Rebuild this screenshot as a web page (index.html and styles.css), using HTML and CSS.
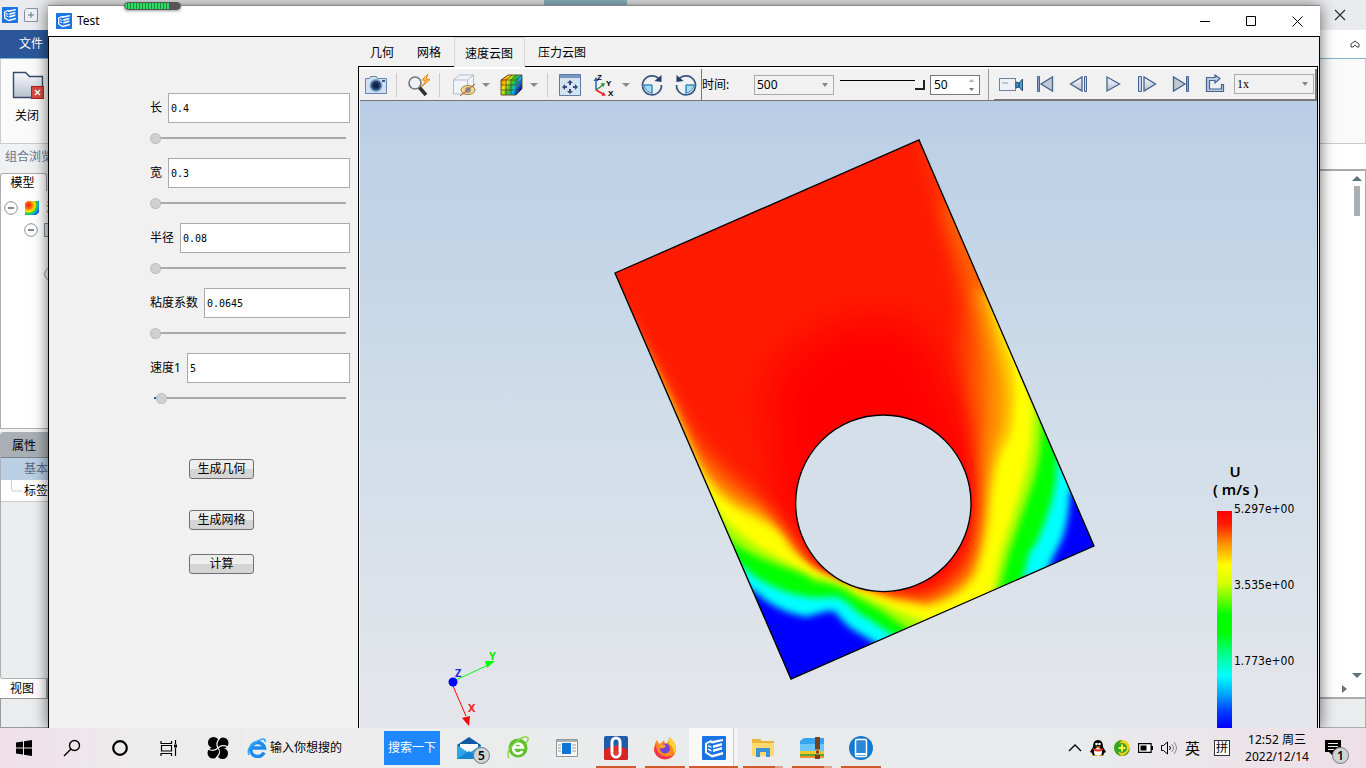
FILE: index.html
```html
<!DOCTYPE html>
<html lang="zh-CN">
<head>
<meta charset="utf-8">
<title>Test</title>
<link rel="stylesheet" href="styles.css">
</head>
<body>
<svg class="defs" aria-hidden="true">
  <defs>
    <symbol id="logo" viewBox="0 0 24 24"><rect width="24" height="24" rx="1" fill="#1b73e8"/><path d="M3 7l6-3 1 1 11-2v2L10 7.500 8 6.500 5 8v8l5 3 11-3v2.500L10 21.500 3 17z" fill="#fff"/><path d="M11 9.500L20 7v2.500l-9 2.500zM11 13.500L20 11v2.500L11 16zM6 9l3.500 1.500v1.500L6 10.500zM6 12.500L9.500 14v1.500L6 14z" fill="#fff"/></symbol>
    <symbol id="minus" viewBox="0 0 14 14"><circle cx="7" cy="7" r="6.3" fill="#fff" stroke="#8a9097"/><path d="M4 7h6" stroke="#555" stroke-width="1.4"/></symbol>
    <linearGradient id="steel" x2="0" y2="1"><stop stop-color="#f8faff"/><stop offset="1" stop-color="#b8c0cd"/></linearGradient>
    <linearGradient id="rainbow" x2="1" y2=".5"><stop stop-color="#ff3a00"/><stop offset=".35" stop-color="#ffe000"/><stop offset=".6" stop-color="#28c828"/><stop offset=".8" stop-color="#00b8ff"/><stop offset="1" stop-color="#0018c8"/></linearGradient>
    <radialGradient id="heat" cx=".25" cy=".3" r=".9"><stop stop-color="#f21800"/><stop offset=".3" stop-color="#ff7a00"/><stop offset=".5" stop-color="#ffe800"/><stop offset=".65" stop-color="#3cd23c"/><stop offset=".8" stop-color="#00a8f0"/><stop offset="1" stop-color="#0018c8"/></radialGradient>
  </defs>
</svg>

<main class="desktop">
  <section class="host">
    <header class="host-title">
      <svg width="16" height="16"><use href="#logo"/></svg>
      <svg width="14" height="14" viewBox="0 0 14 14"><path d="M.5 13.500V2.500l2-2h11v13z" fill="#edf0f4" stroke="#8793a3"/><path d="M7 4v6M4 7h6" stroke="#66758a"/></svg>
      <button class="plain push" aria-label="关闭主窗口"><svg width="12" height="12" viewBox="0 0 12 12"><path d="M1 1l10 10M11 1L1 11" stroke="#333" stroke-width="1.300"/></svg></button>
    </header>
    <div class="host-tabs">
      <button class="file-tab">文件</button>
      <svg class="push" width="10" height="8" viewBox="0 0 10 8"><path d="M1 4l4-3 4 3v3H7L5 5 3 7H1z" fill="none" stroke="#444"/></svg>
    </div>
    <div class="ribbon">
      <button class="ribbon-btn">
        <svg width="34" height="32" viewBox="0 0 34 32"><path d="M3.500 27.500v-25h12l4 4h13v21z" fill="url(#steel)" stroke="#34496b" stroke-width="1.400"/><rect x="21.500" y="16.500" width="12" height="12" fill="#d34a43" stroke="#a8241f"/><path d="M25 20l5 5M30 20l-5 5" stroke="#fff" stroke-width="1.500"/></svg>
        <span>关闭</span>
      </button>
    </div>
    <div class="host-body">
      <aside class="dock">
        <div class="dock-title">组合浏览器</div>
        <div class="dock-tabs"><button class="dock-tab">模型</button></div>
        <div class="tree">
          <div class="tree-row"><svg width="14" height="14"><use href="#minus"/></svg><svg width="16" height="16" viewBox="0 0 16 16"><path d="M1 3l3-2h11v11l-3 3H1z" fill="url(#heat)"/></svg><span class="warm">流体</span></div>
          <div class="tree-row level2"><svg width="14" height="14"><use href="#minus"/></svg><svg width="14" height="14" viewBox="0 0 14 14"><path d="M.5.5h13v13H.5zM4 4h8" fill="#dfe3e8" stroke="#7d8794"/></svg></div>
          <div class="tree-row level3"><svg width="14" height="14"><use href="#minus"/></svg></div>
        </div>
        <div class="props">
          <div class="props-title">属性</div>
          <div class="props-group">基本</div>
          <div class="props-row"><svg width="11" height="22" viewBox="0 0 11 22"><path d="M.5 0v9q0 2 2 2H11" fill="none" stroke="#ccc"/></svg><span>标签</span></div>
        </div>
        <div class="view-tabs"><button class="dock-tab">视图</button></div>
        <div class="dock-foot"></div>
      </aside>
      <div class="host-view">
        <div class="scroll-area">
          <svg width="10" height="5" viewBox="0 0 10 5"><path d="M5 0l5 5H0z" fill="#5f747c"/></svg>
          <span class="scroll-thumb"></span>
          <svg class="scroll-down" width="10" height="5" viewBox="0 0 10 5"><path d="M0 0h10L5 5z" fill="#5f747c"/></svg>
          <svg class="scroll-right" width="5" height="8" viewBox="0 0 5 8"><path d="M0 0l5 4-5 4z" fill="#5f747c"/></svg>
        </div>
        <div class="host-foot"></div>
      </div>
    </div>
  </section>

  <span class="top-chip"></span>

  <section class="window">
    <header class="title-bar">
      <svg width="16" height="16"><use href="#logo"/></svg>
      <span>Test</span>
      <button class="plain push" aria-label="最小化"><svg width="10" height="10" viewBox="0 0 10 10"><path d="M0 5.500h10" stroke="#000"/></svg></button>
      <button class="plain" aria-label="最大化"><svg width="10" height="10" viewBox="0 0 10 10"><path d="M.5.5h9v9h-9z" fill="none" stroke="#000"/></svg></button>
      <button class="plain" aria-label="关闭"><svg width="11" height="11" viewBox="0 0 11 11"><path d="M.5.5l10 10M10.500.5l-10 10" stroke="#000"/></svg></button>
    </header>
    <div class="client">
      <form class="params">
        <div class="field"><label for="len">长</label><input id="len" type="text" value="0.4"></div>
        <input class="slide" type="range" aria-label="长" value="0">
        <div class="field"><label for="wid">宽</label><input id="wid" type="text" value="0.3"></div>
        <input class="slide" type="range" aria-label="宽" value="0">
        <div class="field"><label for="rad">半径</label><input id="rad" type="text" value="0.08"></div>
        <input class="slide" type="range" aria-label="半径" value="0">
        <div class="field"><label for="vis">粘度系数</label><input id="vis" type="text" value="0.0645"></div>
        <input class="slide" type="range" aria-label="粘度系数" value="0">
        <div class="field"><label for="vel">速度1</label><input id="vel" type="text" value="5"></div>
        <input class="slide started" type="range" aria-label="速度1" value="3">
        <div class="actions">
          <button type="button">生成几何</button>
          <button type="button">生成网格</button>
          <button type="button">计算</button>
        </div>
      </form>

      <div class="result">
        <nav class="tabs">
          <button>几何</button><button>网格</button><button class="active">速度云图</button><button>压力云图</button>
        </nav>
        <div class="frame">
          <div class="toolbar">
            <div class="tools">
              <button class="tool" aria-label="截图"><svg width="24" height="24" viewBox="0 0 24 24"><path d="M1.500 5.500h4l1-2h6l1 2h9v15h-21z" fill="#cfe0f2" stroke="#6484a8"/><circle cx="12" cy="12.500" r="6.500" fill="#7ea0c6"/><circle cx="12" cy="12.500" r="5" fill="#28487a"/><circle cx="12" cy="12.500" r="3" fill="#10244a"/><path d="M18 8h3" stroke="#34588a" stroke-width="2"/></svg></button>
              <i class="sep"></i>
              <button class="tool" aria-label="缩放"><svg width="24" height="24" viewBox="0 0 24 24"><path d="M12 14l7 8" stroke="#333" stroke-width="3.500"/><circle cx="8" cy="10" r="6" fill="#edf2f8" stroke="#777" stroke-width="1.600"/><path d="M21 1l-6 6 4 .5-4 6 8-7-4-.5z" fill="#ffc94a" stroke="#e8861b"/></svg></button>
              <i class="sep"></i>
              <button class="tool cube" aria-label="显示"><svg width="24" height="24" viewBox="0 0 24 24"><path d="M1.500 7l6-5h14v13l-5 6h-15z" fill="#f1f4f8" stroke="#b4bbc5"/><path d="M1.500 7h14v14M15.500 7l6-5" fill="none" stroke="#b4bbc5"/><ellipse cx="16" cy="17" rx="7" ry="4.500" fill="#f8d88c" stroke="#a58137"/><circle cx="16" cy="17" r="3" fill="#8b93ad"/><path d="M8 23L23 11" stroke="#ba4c2c"/></svg></button>
              <button class="drop" aria-label="显示选项"></button>
              <button class="tool next" aria-label="着色"><svg width="24" height="24" viewBox="0 0 24 24"><path d="M1 7l7-5h14v14l-6 6H1z" fill="url(#rainbow)" stroke="#635535"/><path d="M1 7h15v15M16 7l6-5M6 7v15M11 7v15M1 12h15l6-6M1 17h15l6-6M6 7l6-5M11 7l6-5M18 5v15" fill="none" stroke="#4b4633" stroke-width=".8"/></svg></button>
              <button class="drop" aria-label="着色选项"></button>
              <i class="sep"></i>
              <button class="tool" aria-label="适应窗口"><svg width="24" height="24" viewBox="0 0 24 24"><path d="M1.500 1.500h21v21h-21z" fill="#d7e3f0" stroke="#5e7ba5"/><path d="M2 2h20v3H2z" fill="#7895bd"/><path d="M12 7l-3 3h2v2h2v-2h2zM12 21l-3-3h2v-2h2v2h2zM4 14l3-3v2h2v2H7v2zM20 14l-3-3v2h-2v2h2v2z" fill="#304d7b"/></svg></button>
              <button class="tool wide" aria-label="视角"><svg width="24" height="24" viewBox="0 0 24 24"><path d="M4 17V6" stroke="#2864c0" stroke-width="1.500"/><path d="M1.500 8L4 4l2.500 4z" fill="#2864c0"/><path d="M4 17l7-5" stroke="#2a9140" stroke-width="1.500"/><path d="M13 10l-1.500 4-3-3.500z" fill="#2a9140"/><path d="M4 17l7 4" stroke="#e22" stroke-width="1.500"/><path d="M14 22.500l-4.500.5 2-4z" fill="#e22"/><text x="5" y="7" class="axis-mini">Z</text><text x="14" y="13" class="axis-mini">Y</text><text x="16" y="23" class="axis-mini">X</text></svg></button>
              <button class="drop" aria-label="视角选项"></button>
              <button class="tool rot" aria-label="顺时针旋转"><svg width="24" height="24" viewBox="0 0 24 24"><path d="M12 12v8a9 9 0 0 1-8-8z" fill="#a5dcf5" stroke="#3989bd"/><path d="M19.500 6.500A9.500 9.500 0 1 0 21.500 12" fill="none" stroke="#3a5680" stroke-width="1.700"/><path d="M21.500 2v7l-7-1z" fill="#233f6b"/><path d="M2.500 12H12v9" fill="none" stroke="#3989bd"/></svg></button>
              <button class="tool wide" aria-label="逆时针旋转"><svg width="24" height="24" viewBox="0 0 24 24"><path d="M12 12v8a9 9 0 0 0 8-8z" fill="#a5dcf5" stroke="#3989bd"/><path d="M4.500 6.500A9.500 9.500 0 1 1 2.500 12" fill="none" stroke="#3a5680" stroke-width="1.700"/><path d="M2.500 2v7l7-1z" fill="#233f6b"/><path d="M21.500 12H12v9" fill="none" stroke="#3989bd"/></svg></button>
            </div>
            <div class="time">
              <label for="time">时间:</label>
              <span class="select"><select id="time"><option>500</option></select></span>
              <input class="time-slide" type="range" aria-label="时间步" value="100">
              <span class="spin"><input type="number" aria-label="帧" value="50"><svg width="5" height="12" viewBox="0 0 5 12"><path d="M0 3h5L2.500 0z" fill="#aaa"/><path d="M0 9h5l-2.500 3z" fill="#777"/></svg></span>
            </div>
            <div class="play">
              <button aria-label="录像"><svg width="24" height="20" viewBox="0 0 24 20"><rect x=".5" y="4.500" width="16" height="12" fill="#eef2f7" stroke="#71819a"/><path d="M3 8h6v2H3z" fill="#bcc4d0"/><path d="M17 8l3 1v4l-3 1zM23.500 5v12L20 13V9z" fill="#4b9bd0" stroke="#274f7b"/></svg></button>
              <button aria-label="首帧"><svg width="20" height="20" viewBox="0 0 20 20"><path d="M17.500 3v14L6 10z" fill="#c3c8d0" stroke="#46628e" stroke-width="1.300"/><path d="M2.500 2.500h2v15h-2z" fill="#8fa3c2" stroke="#46628e"/></svg></button>
              <button aria-label="上一帧"><svg width="20" height="20" viewBox="0 0 20 20"><path d="M13 3v14L1.500 10z" fill="url(#steel)" stroke="#46628e" stroke-width="1.300"/><path d="M15.500 2.500h2v15h-2z" fill="#c7d6eb" stroke="#46628e"/></svg></button>
              <button aria-label="播放"><svg width="20" height="20" viewBox="0 0 20 20"><path d="M4 3v14l12.500-7z" fill="url(#steel)" stroke="#46628e" stroke-width="1.300"/></svg></button>
              <button aria-label="下一帧"><svg width="20" height="20" viewBox="0 0 20 20"><path d="M7 3v14l11.500-7z" fill="url(#steel)" stroke="#46628e" stroke-width="1.300"/><path d="M1.500 2.500h3v15h-3z" fill="#c7d6eb" stroke="#46628e"/></svg></button>
              <button aria-label="末帧"><svg width="20" height="20" viewBox="0 0 20 20"><path d="M2.500 3v14L14 10z" fill="#c3c8d0" stroke="#46628e" stroke-width="1.300"/><path d="M15.500 2.500h2v15h-2z" fill="#8fa3c2" stroke="#46628e"/></svg></button>
              <button aria-label="循环"><svg width="20" height="20" viewBox="0 0 20 20"><path d="M1.500 17.500h17v-7h-2v4.500h-12V6.500H10V9l5-4.500L10 1v2.500H1.500z" fill="#b9cce6" stroke="#46628e" stroke-width="1.200"/></svg></button>
              <span class="select speed"><select aria-label="速度"><option>1x</option></select></span>
            </div>
          </div>

          <div class="view">
            <svg class="plot" viewBox="360 101 957 627" preserveAspectRatio="xMinYMin slice" role="img" aria-label="速度云图">
              <defs>
                <clipPath id="plate"><path d="M45-321L957-720 1482 498 573 897z"/></clipPath>
                <filter id="b40" filterUnits="userSpaceOnUse" x="-300" y="-900" width="2200" height="2100"><feGaussianBlur stdDeviation="60"/></filter>
                <filter id="b20" filterUnits="userSpaceOnUse" x="-300" y="-900" width="2200" height="2100"><feGaussianBlur stdDeviation="24"/></filter>
                <filter id="b16" filterUnits="userSpaceOnUse" x="-300" y="-900" width="2200" height="2100"><feGaussianBlur stdDeviation="17"/></filter>
                <filter id="b11" filterUnits="userSpaceOnUse" x="-300" y="-900" width="2200" height="2100"><feGaussianBlur stdDeviation="11"/></filter>
              </defs>
              <g transform="translate(600 380) scale(.33333)">
                <g clip-path="url(#plate)">
                  <path fill="#ff1b00" d="M0-800h1600V950H0z"/>
                  <path fill="#f00" filter="url(#b40)" d="M500 0Q640-180 820-190T1030 0L1140 250V480L960 660 700 620 540 420z"/>
                  <path fill="#ff3800" filter="url(#b20)" d="M0-420L50-290 90-190Q180-10 260 120 330 220 420 290T555 450 640 570 740 620L850 638 960 648Q1060 620 1115 500T1128 250Q1115 110 1085 0T1085-210L1020-500 960-720 1200-700 1700 500 600 1100z"/>
                  <path fill="#ff6400" filter="url(#b20)" d="M0-360L70-210Q190 20 270 180 350 270 430 335T575 490 650 585 760 624Q860 655 960 662 1060 640 1115 540 1145 430 1142 310T1128 110Q1110 20 1120-120L1100-300 1020-540 1400-400 1700 500 600 1100z"/>
                  <path fill="#ff9400" filter="url(#b16)" d="M0-310L90-170Q200 40 290 230 355 315 430 355T560 475 645 578 760 622L880 656 970 668Q1060 645 1112 570 1148 480 1150 340T1165 130Q1170 30 1160-80L1125-280 1400-200 1700 500 600 1100z"/>
                  <path fill="#ffc400" filter="url(#b11)" d="M0-220L140-80Q225 80 305 265 365 355 440 385T562 487 645 574 762 622L880 660 980 676Q1070 655 1120 580 1155 500 1164 360T1205 150Q1222 50 1200-50T1150-270L1500-200 1700 500 600 1100z"/>
                  <path fill="#ff0" filter="url(#b11)" d="M0-120L190 80 310 290Q360 370 450 410T560 500Q650 590 750 624L880 665 980 685Q1085 660 1130 590 1165 500 1175 370T1230 170Q1255 60 1235-50L1185-210 1500-100 1700 500 600 1100z"/>
                  <path fill="#a8ff00" filter="url(#b11)" d="M300 300L365 410Q440 485 530 530T630 584Q720 604 765 637L845 672 980 728 500 1100 300 800z"/>
                  <path fill="#a8ff00" filter="url(#b11)" d="M1380-100L1298 40Q1303 170 1273 290 1238 410 1200 520L1168 680 1600 700 1600 50z"/>
                  <path fill="#0f0" filter="url(#b11)" d="M300 370L380 475Q450 528 540 558T640 604Q720 614 760 648L840 690 935 755 500 1100 300 800z"/>
                  <path fill="#0f0" filter="url(#b11)" d="M1420 0L1325 80Q1330 200 1302 300 1265 410 1230 510L1190 660 1600 700 1600 50z"/>
                  <path fill="#0ff" filter="url(#b11)" d="M300 480L430 562Q490 615 570 638T705 648Q740 660 770 695L830 732 900 780 500 1100z"/>
                  <path fill="#0ff" filter="url(#b11)" d="M1420 180L1370 235Q1375 310 1340 410T1290 510L1262 620 1600 600z"/>
                  <path fill="#00f" filter="url(#b11)" d="M300 550L465 635Q530 695 620 710 690 688 705 695 740 740 770 755L845 800 500 1100z"/>
                  <path fill="#00f" filter="url(#b11)" d="M1460 260L1410 340Q1405 445 1375 500T1335 600L1600 600z"/>
                </g>
                <ellipse cx="850" cy="370" rx="263" ry="265" fill="#d4dfe9" stroke="#000" stroke-width="4"/>
                <path d="M45-321L957-720 1482 498 573 897z" fill="none" stroke="#000" stroke-width="4"/>
              </g>
              <g class="axes">
                <path d="M456 680L486 666" stroke="#0f0"/><path d="M485 661l10 0-8 7z" fill="#0f0"/>
                <path d="M453 686L466 716" stroke="#f00"/><path d="M462 718l8-2-1 10z" fill="#f00"/>
                <circle cx="453" cy="682" r="4.500" fill="#00f"/>
                <text x="455" y="677" fill="#22d">Z</text><text x="489" y="660" fill="#0e0">Y</text><text x="468" y="712" fill="#e22">X</text>
              </g>
            </svg>
            <div class="legend">
              <div class="legend-title">U<br>( m/s )</div>
              <div class="legend-body">
                <span class="ramp"></span>
                <div class="ticks"><span>5.297e+00</span><span>3.535e+00</span><span>1.773e+00</span></div>
              </div>
            </div>
          </div>
        </div>
      </div>
    </div>
  </section>

  <span class="meter"></span>
</main>

<footer class="taskbar">
  <button class="task start" aria-label="开始"><svg width="16" height="16" viewBox="0 0 16 16"><path d="M0 2.500l7-1v6H0zM8 1.300L16 0v7.500H8zM0 8.500h7v6l-7-1zM8 8.500h8V16l-8-1.300z"/></svg></button>
  <button class="task start" aria-label="搜索"><svg width="18" height="18" viewBox="0 0 18 18"><circle cx="11.500" cy="6.500" r="5" fill="none" stroke="#000" stroke-width="1.400"/><path d="M8 10l-7 7" stroke="#000" stroke-width="1.500"/></svg></button>
  <button class="task start" aria-label="Cortana"><svg width="16" height="16" viewBox="0 0 16 16"><circle cx="8" cy="8" r="6.800" fill="none" stroke="#000" stroke-width="2.200"/></svg></button>
  <button class="task start" aria-label="任务视图"><svg width="17" height="16" viewBox="0 0 17 16"><path d="M1 1v2.500h10.500V1M1 16v-2.500h10.500V16M1.500 5.500h10v5.500h-10zM15.500 0v4M15.500 8v8" fill="none" stroke="#000" stroke-width="1.200"/><path d="M14 4.500h3v3h-3z"/></svg></button>
  <button class="task swirl" aria-label="搜狗"><svg width="22" height="22" viewBox="0 0 22 22"><circle cx="6.500" cy="5.500" r="5.500"/><circle cx="16" cy="6" r="5.500"/><circle cx="15.500" cy="16.500" r="5.500"/><circle cx="6" cy="16" r="5.500"/><circle cx="11" cy="11" r="4"/><path d="M11 11Q8 6 13 1M11 11q4-4 10-1M11 11q4 5-2 10M11 11q-4 4-10 1" fill="none" stroke="#eee" stroke-width="1.200"/></svg></button>
  <form class="search">
    <svg width="20" height="20" viewBox="0 0 20 20"><path d="M17 14.500A7 7 0 1 1 17.500 10H4" fill="none" stroke="#1c8cf0" stroke-width="3.400"/><path d="M2 17Q-1 10 9 4t9 0" fill="none" stroke="#34a6f6" stroke-width="1.600"/></svg>
    <input type="text" aria-label="搜索内容" value="输入你想搜的">
    <button type="button">搜索一下</button>
  </form>
  <button class="task mail" aria-label="邮件"><svg width="26" height="24" viewBox="0 0 26 24"><path d="M1 9L13 1l12 8v14H1z" fill="#0d5aa5"/><path d="M4 8h18v9H4z" fill="#fff"/><path d="M1 9l12 8 12-8v14H1z" fill="#29a8e8"/><path d="M1 23l12-8 12 8z" fill="#1487d0"/></svg><span class="badge">5</span></button>
  <button class="task" aria-label="浏览器"><svg width="22" height="24" viewBox="0 0 22 24"><circle cx="11" cy="12" r="9.500" fill="#5fbf2c"/><path d="M15.500 15A5 5 0 1 1 16 11.500H7" fill="none" stroke="#fff" stroke-width="2.600"/><path d="M2 22Q-2 16 8 7T21 2q1 2-2 5" fill="none" stroke="#8ad84e" stroke-width="1.500"/></svg></button>
  <button class="task" aria-label="阅读"><svg width="22" height="18" viewBox="0 0 22 18"><path d="M.5.500h21v17H.5z" fill="#f7f7f7" stroke="#8d949b"/><path d="M1 1h20v2H1z" fill="#aab2ba"/><path d="M6 4h9v11H6z" fill="#0b76d8"/><path d="M2 6h3M2 9h3M2 12h3M16 6h4M16 9h4M16 12h4" stroke="#999"/></svg></button>
  <button class="task open" aria-label="温度计"><svg width="24" height="24" viewBox="0 0 24 24"><rect width="24" height="24" rx="2" fill="#1e5ba8"/><path d="M0 14q12-8 24 0v8q0 2-2 2H2q-2 0-2-2z" fill="#d82424"/><path d="M8 6a4 4 0 0 1 8 0v11a4 4 0 0 1-8 0z" fill="none" stroke="#fff" stroke-width="3"/><circle cx="12" cy="17" r="2.500" fill="#e83b2f"/><path d="M12 9v8" stroke="#e83b2f" stroke-width="1.500"/></svg></button>
  <button class="task open" aria-label="Firefox"><svg width="24" height="24" viewBox="0 0 24 24"><path d="M16 1q7 5 7 12a11 10.500 0 0 1-22 0q0-5 3-9l2 4q3-1 5-4l1 4q4-1 4-7z" fill="#ff8a1f"/><path d="M1 13a11 10.500 0 0 0 21 4q-4 5-11 3-8-2-8-12z" fill="#f2305c"/><path d="M16 1q7 5 7 12l-2 5q0-7-5-10z" fill="#ffd23a"/><circle cx="12" cy="12.500" r="5" fill="#7543d6"/><path d="M6 9q5-2 7 1-2 3-6 2z" fill="#ffa22b"/></svg></button>
  <button class="task open active" aria-label="Test"><svg width="24" height="24"><use href="#logo"/></svg></button>
  <button class="task open multi" aria-label="文件夹"><svg width="22" height="20" viewBox="0 0 22 20"><path d="M0 1h8l2 2h12v15H0z" fill="#e9b43a"/><path d="M0 5h22v13H0z" fill="#ffd970"/><path d="M4 10h14v9h-4v-5H8v5H4z" fill="#3b94d6"/></svg></button>
  <button class="task open multi" aria-label="压缩"><svg width="24" height="22" viewBox="0 0 24 22"><path d="M0 4l4-3h20v14H0z" fill="#35a6ee"/><path d="M0 7h24v7H0z" fill="#6cc6f8"/><path d="M0 14h24v3H0z" fill="#f4c724"/><path d="M0 17h24v3H0z" fill="#59a736"/><path d="M0 19h24v2H0z" fill="#ee8f25"/><path d="M15 0h5v22h-5z" fill="#76411f"/><path d="M15.500 13h4v4h-4z" fill="none" stroke="#f2cc61"/></svg></button>
  <button class="task open" aria-label="手机"><svg width="24" height="24" viewBox="0 0 24 24"><circle cx="12" cy="12" r="12" fill="#1778cf"/><rect x="6.500" y="3.500" width="11" height="17" rx="1.500" fill="#2b87d8" stroke="#fff" stroke-width="1.500"/><path d="M7 18h10" stroke="#fff" stroke-width="2"/></svg></button>

  <div class="tray">
    <svg width="14" height="8" viewBox="0 0 14 8"><path d="M1 7l6-6 6 6" fill="none" stroke="#000" stroke-width="1.300"/></svg>
    <svg width="16" height="17" viewBox="0 0 16 17"><path d="M8 0q5 0 5 7l3 5-2 1-1 3H3l-1-3-2-1 3-5q0-7 5-7z"/><ellipse cx="8" cy="12" rx="4" ry="4" fill="#fff"/><path d="M3 8q5 3 10 0v2q-5 3-10 0z" fill="#e22"/><circle cx="6.500" cy="4" r="1.300" fill="#fff"/><circle cx="9.500" cy="4" r="1.300" fill="#fff"/><path d="M5 6.500h6l-3 2zM2 16q3-2 6 0 3-2 6 0z" fill="#f9a51a"/></svg>
    <svg width="16" height="16" viewBox="0 0 16 16"><circle cx="8" cy="8" r="8" fill="#f6cf18"/><path d="M8 0a8 8 0 0 0 0 16Q3 13 4 8t4-8zM8 16a8 8 0 0 0 8-8q-2 5-8 8z" fill="#35a52c"/><circle cx="8" cy="8" r="5" fill="#35a52c"/><path d="M8 4.500v7M4.500 8h7" stroke="#ffef3a" stroke-width="2"/></svg>
    <svg width="15" height="10" viewBox="0 0 15 10"><path d="M.6.600h12.500v8.800H.6z" fill="#fff" stroke="#000" stroke-width="1.200"/><path d="M2.500 2.500h6v5h-6zM13 3h2v4h-2z"/></svg>
    <svg width="16" height="14" viewBox="0 0 16 14"><path d="M.5 4.500h2l4-3.500v12l-4-3.500h-2z" fill="none" stroke="#000"/><path d="M8.500 5q2 2 0 4" fill="none" stroke="#000"/><path d="M10.500 3q4 4 0 8M13 1q5 6 0 12" fill="none" stroke="#888"/></svg>
    <span class="ime">英</span>
    <span class="pinyin">拼</span>
    <div class="clock">12:52 周三<br>2022/12/14</div>
    <button class="task notice" aria-label="通知"><svg width="16" height="16" viewBox="0 0 16 16"><path d="M0 0h16v12H8v4l-4-4H0z"/><path d="M3 3.500h10M3 6.500h10M3 9.500h6" stroke="#eee" stroke-width="1.200"/></svg><span class="badge">1</span></button>
  </div>
</footer>
</body>
</html>
```

FILE: styles.css
```css
* { box-sizing: border-box; }
html, body { height: 100%; }
body {
  margin: 0;
  display: flex;
  flex-direction: column;
  overflow: hidden;
  font: 12px/16px "Noto Sans", "Noto Sans CJK SC", sans-serif;
  color: #000;
}
button, input, select { font: inherit; color: inherit; margin: 0; padding: 0; border: 0; border-radius: 0; background: none; }
button { display: flex; align-items: center; justify-content: center; white-space: nowrap; }
svg { display: block; flex: none; }
.defs { position: absolute; width: 0; height: 0; }
.push { margin-left: auto; }

.desktop { flex: 1; min-height: 0; position: relative; overflow: hidden; }

/* application behind the dialog */
.host { height: 100%; display: flex; flex-direction: column; background: #fff; }
.host-title { height: 30px; flex: none; display: flex; align-items: center; gap: 6px; padding: 0 2px; background: #e9ebee; }
.plain { width: 46px; height: 30px; }
.host-title .plain { margin-right: 1px; }
.host-tabs { height: 29px; flex: none; display: flex; align-items: center; padding-right: 6px; border-bottom: 1px solid #7fb5cb; }
.file-tab { width: 62px; height: 28px; background: #2b579a; color: #fff; }
.ribbon { height: 85px; flex: none; display: flex; background: #fafafa; border: 1px solid #ccc; border-top: 0; }
.ribbon-btn { flex-direction: column; justify-content: flex-start; gap: 6px; width: 52px; padding-top: 11px; }
.host-body { flex: 1; min-height: 0; display: flex; }
.dock { width: 340px; display: flex; flex-direction: column; background: #f0f1f3; }
.dock-title { height: 29px; flex: none; padding: 5px 5px; color: #66758c; }
.dock-tabs { height: 18px; flex: none; }
.dock-tab { width: 47px; height: 18px; background: #fff; border: 1px solid #aaa; border-bottom: 0; border-radius: 3px 3px 0 0; padding-right: 2px; }
.tree { height: 238px; flex: none; border: 1px solid #abb0b4; border-top: 0; background: #fff; padding: 6px 3px; }
.tree-row { height: 22px; display: flex; align-items: center; gap: 6px; }
.warm { color: #c96a10; }
.level2 { padding-left: 20px; }
.level3 { padding-left: 40px; height: 66px; }
.props { flex: 1; margin-top: 3px; border: 1px solid #aab0b5; border-radius: 3px; background: #ecedef; overflow: hidden; }
.props-title { height: 25px; padding: 5px 11px; background: #a9afb4; border-bottom: 1px solid #7b8288; }
.props-group { height: 22px; padding: 3px 23px; background: #bbcfe5; color: #5b6b84; }
.props-row { height: 22px; display: flex; gap: 2px; padding-left: 10px; align-items: center; background: #fff; border-bottom: 1px solid #ccc; }
.view-tabs { height: 19px; flex: none; display: flex; background: #a9afb4; }
.view-tabs .dock-tab { height: 19px; border-left: 0; border-top: 0; border-radius: 0; }
.dock-foot { height: 30px; flex: none; border: 1px solid #999; background: #ebecee; }
.host-view { flex: 1; display: flex; flex-direction: column; padding-top: 25px; }
.scroll-area { flex: 1; display: flex; flex-direction: column; align-items: flex-end; gap: 5px; padding: 5px 3px 4px; border: 2px solid #aaa; border-left: 0; border-bottom-width: 1px; border-right-width: 1px; }
.scroll-thumb { width: 6px; height: 30px; margin-right: 2px; background: #a9afb3; }
.scroll-down { margin-top: auto; }
.scroll-right { margin: 2px 15px 0 0; }
.host-foot { height: 30px; flex: none; background: #ebecee; border: 1px solid #aaa; }

.top-chip { position: absolute; top: 0; left: 544px; width: 83px; height: 5px; background: #8fbcc8; }
.meter {
  position: absolute; left: 124px; top: 2px; width: 57px; height: 8px;
  border: 1px solid #555; border-radius: 4px;
  background: linear-gradient(90deg, transparent 44px, #555 44px), repeating-linear-gradient(90deg, #32dc64 0 2px, #168c3c 2px 3px);
  box-shadow: 0 1px 3px #999;
}

/* dialog window */
.window {
  position: absolute; left: 48px; top: 5px; right: 46px; bottom: 0;
  display: flex; flex-direction: column;
  border-top: 1px solid #888;
  background: #fff;
  box-shadow: 0 1px 14px rgba(0, 0, 0, .6);
}
.title-bar { height: 30px; flex: none; display: flex; align-items: center; padding-left: 8px; }
.title-bar span { margin-left: 5px; }
.client { flex: 1; min-height: 0; display: flex; border: 1px solid #000; border-bottom: 0; background: #f1f1f1; }

.params { width: 309px; flex: none; padding: 56px 8px 0 101px; }
.field { display: flex; align-items: center; gap: 6px; height: 30px; }
.field input { flex: 1; min-width: 0; height: 30px; padding: 0 2px; border: 1px solid #aaa; background: #fff; font: 10px/16px "DejaVu Sans Mono", monospace; }
.slide { display: block; appearance: none; width: 196px; height: 11px; margin: 10px 0 14px; background: linear-gradient(#aaa, #aaa) 5px 4px / 191px 2px no-repeat; }
.slide.started { background: linear-gradient(#06b, #06b) 4px 4px / 6px 2px no-repeat, linear-gradient(#aaa, #aaa) 5px 4px / 191px 2px no-repeat; }
.slide::-webkit-slider-thumb { appearance: none; width: 11px; height: 11px; border-radius: 50%; background: #d0d0d0; border: 1px dotted #aaa; }
.actions { display: flex; flex-direction: column; gap: 24px; padding: 41px 0 0 39px; }
.actions button { width: 65px; height: 20px; border: 1px solid #707070; border-radius: 3px; background: linear-gradient(#eee 50%, #d5d5d5 50%); }
.actions button + button { margin-top: 7px; }
.actions button + button + button { margin-top: 0; }

.result { flex: 1; min-width: 0; display: flex; flex-direction: column; padding-right: 1px; }
.tabs { height: 29px; flex: none; display: flex; }
.tabs button { height: 29px; padding: 3px 12px 0 11px; }
.tabs .active { height: 30px; margin: 0 2px 0 1px; padding: 2px 11px 0 10px; border: 1px solid #d8d8d8; border-bottom: 0; background: #f1f1f1; z-index: 1; }
.tabs button:first-child { padding-left: 12px; }
.frame { flex: 1; min-height: 0; display: flex; flex-direction: column; border: 1px solid #000; border-bottom: 0; padding-left: 1px; }
.toolbar { height: 34px; flex: none; display: flex; border-top: 2px solid #fff; border-bottom: 1px solid #777; }
.tools { display: flex; align-items: center; width: 342px; flex: none; padding-left: 4px; border-right: 1px solid #777; }
.tool { width: 24px; height: 28px; flex: none; }
.tool.cube { margin-left: 2px; }
.sep { width: 1px; height: 24px; margin: 0 10px 0 8px; background: #ccc; }
.drop { width: 10px; height: 10px; margin-left: 5px; }
.drop::after { content: ""; border: 4px solid transparent; border-top-color: #888; border-bottom: 0; }
.tool.next { margin-left: 9px; }
.tool.wide { margin-left: 10px; }
.tool.rot { margin-left: 9px; }
.axis-mini { font: bold 8px "Liberation Sans", sans-serif; }
.time { display: flex; align-items: center; flex: 1; min-width: 0; border-right: 1px solid #999; }
.time label { width: 52px; }
.select { position: relative; display: flex; width: 80px; height: 20px; border: 1px solid #aaa; background: #f1f1f1; }
.select select { appearance: none; width: 100%; padding-left: 2px; }
.select::after { content: ""; position: absolute; right: 5px; top: 7px; border: 3px solid transparent; border-top: 4px solid #888; border-bottom: 0; }
.time-slide { appearance: none; width: 85px; height: 12px; margin: 0 5px 0 6px; background: linear-gradient(#000, #000) 0 1px / 75px 1px no-repeat; }
.time-slide::-webkit-slider-thumb { appearance: none; width: 10px; height: 10px; background: #f4f4f4; border-right: 2px solid #222; border-bottom: 2px solid #222; }
.spin { display: flex; align-items: center; width: 50px; height: 20px; padding: 0 5px 0 3px; border: 1px solid #777; background: #fff; }
.spin input { flex: 1; min-width: 0; appearance: textfield; }
.spin input::-webkit-inner-spin-button { appearance: none; }
.play { display: flex; align-items: center; margin-left: 5px; border-bottom: 1px solid #777; border-right: 2px solid #777; padding-right: 1px; }
.play button { width: 34px; height: 28px; }
.speed { margin-left: 2px; }
.speed select { font-family: "Liberation Serif", serif; }

.view { flex: 1; min-height: 0; position: relative; background: linear-gradient(#b9cee6, #d0dde9 50%, #e5e6eb); overflow: hidden; }
.plot { width: 100%; height: 100%; }
.axes { font: bold 11px "Noto Sans", sans-serif; fill: none; }
.legend { position: absolute; right: 0; bottom: 0; width: 102px; }
.legend-title { width: 44px; font-size: 15px; line-height: 18px; font-weight: 600; text-align: center; white-space: nowrap; }
.legend-body { display: flex; gap: 2px; margin-top: 3px; padding-left: 2px; }
.legend-title { margin-left: -2px; }
.ramp { width: 15px; height: 217px; margin-top: 10px; background: linear-gradient(#f00 0, #ff1a00 6%, #ff9000 15%, #ff0 25%, #d8ff00 33%, #0f0 48%, #0f0 56%, #00ff80 65%, #0ff 76%, #0af 84%, #0040ff 92%, #00f); }
.ticks { display: flex; flex-direction: column; gap: 60px; font: 12px/16px "DejaVu Sans Condensed", "DejaVu Sans", sans-serif; }

/* taskbar */
.taskbar { height: 40px; flex: none; display: flex; background: linear-gradient(90deg, #f0dfe9, #ececec 10%, #e8eaeb 80%, #eedfe6); }
.task { position: relative; width: 49px; height: 40px; flex: none; }
.task.start { width: 48px; }
.task.swirl { width: 52px; }
.search { display: flex; align-items: center; width: 196px; margin-right: 4px; padding-left: 3px; background: #ededed; }
.search input { flex: 1; min-width: 0; padding-left: 3px; }
.search button { width: 56px; height: 34px; background: #2088ff; color: #fff; }
.badge { position: absolute; left: 29px; top: 19px; width: 17px; height: 17px; border: 1px solid #777; border-radius: 50%; background: #d0d4d7; font-weight: 600; line-height: 15px; text-align: center; }
.open::after { content: ""; position: absolute; left: 5px; right: 4px; bottom: 0; height: 2px; background: #cf5b2b; }
.open.multi::after { background: linear-gradient(90deg, #cf5b2b 80%, #dfa08a 80%); }
.open.active { background: linear-gradient(90deg, #f8f8f8 44px, #ccc 44px 45px, #f3f3f3 45px); }
.open.active::after { left: 0; right: 0; }
.tray { margin-left: auto; display: flex; align-items: center; gap: 8px; }
.ime { font-size: 15px; line-height: 20px; }
.pinyin { width: 16px; height: 16px; margin: 0 4px 0 6px; border: 1px solid #333; background: #fff; line-height: 14px; text-align: center; }
.clock { width: 70px; line-height: 17px; text-align: center; }
.notice { width: 52px; margin-left: -6px; justify-content: flex-start; padding-left: 11px; }
.notice .badge { left: 18px; }
```
